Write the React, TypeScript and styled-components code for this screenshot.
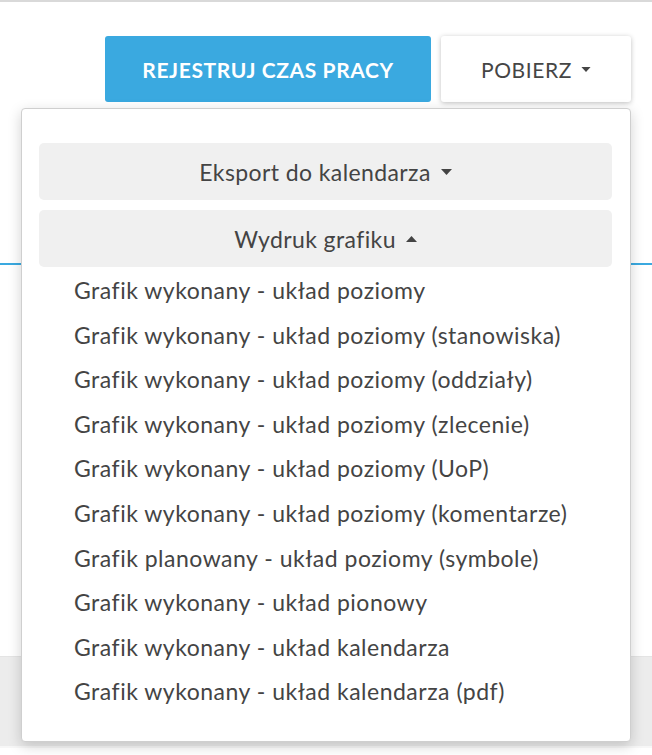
import React from 'react'
import styled, { createGlobalStyle } from 'styled-components'

const GlobalStyle = createGlobalStyle`
    body {
        margin: 0;
        background: #ffffff;
        font-family: Lato, "Open Sans", sans-serif;
        color: #444444;
    }
`

const Page = styled.div`
    position: relative;
    width: 652px;
    height: 755px;
    overflow: hidden;
    border-top: 2px solid #d9d9d9;
    box-sizing: border-box;
`

const Toolbar = styled.div`
    display: flex;
    justify-content: flex-end;
    gap: 10px;
    padding: 34px 21px 0 0;
`

const ActionButton = styled.button<{ $primary?: boolean }>`
    display: flex;
    align-items: center;
    justify-content: center;
    gap: 9px;
    height: 66px;
    border: none;
    border-radius: 3px;
    font-family: Lato, sans-serif;
    font-size: 21px;
    letter-spacing: 0.6px;
    font-weight: ${p => (p.$primary ? 700 : 400)};
    text-transform: uppercase;
    cursor: pointer;
    width: ${p => (p.$primary ? '326px' : '190px')};
    background: ${p => (p.$primary ? '#3aa9e0' : '#ffffff')};
    color: ${p => (p.$primary ? '#ffffff' : '#454545')};
    box-shadow: ${p => (p.$primary ? 'none' : '0 1px 5px rgba(0,0,0,0.25)')};
`

const Divider = styled.div`
    margin-top: 161px;
    height: 2px;
    background: #3aa9e0;
`

const Footer = styled.div`
    margin-top: 391px;
    height: 90px;
    background: #ececec;
    border-top: 1px solid #e4e4e4;
`

const FooterLine = styled.div`
    margin-top: 89px;
    height: 2px;
    background: #f7f7f7;
`

const Menu = styled.div`
    position: absolute;
    left: 21px;
    top: 106px;
    width: 610px;
    height: 634px;
    box-sizing: border-box;
    padding: 34px 18px 0 17px;
    background: #ffffff;
    border: 1px solid #cfcfcf;
    border-radius: 4px;
    box-shadow: 0 4px 14px rgba(0,0,0,0.18);
    display: flex;
    flex-direction: column;
    gap: 10px;
`

const SectionButton = styled.button`
    display: flex;
    align-items: center;
    justify-content: center;
    gap: 10px;
    height: 57px;
    border: none;
    border-radius: 5px;
    background: #f0f0f0;
    font-family: Lato, sans-serif;
    font-size: 23px;
    letter-spacing: 0.4px;
    color: #444444;
`

const List = styled.ul`
    list-style: none;
    margin: -9px 0 0;
    padding: 0 0 0 35px;
`

const Item = styled.li`
    height: 44.56px;
    display: flex;
    align-items: center;
    font-size: 23px;
    letter-spacing: 0.5px;
    color: #444444;
`

const Caret = ({ up, small }: { up?: boolean; small?: boolean }) => (
    <svg width={small ? 10 : 11} height={small ? 5 : 6} viewBox="0 0 11 6">
        <path d={up ? 'M0 6 L5.5 0 L11 6 Z' : 'M0 0 L5.5 6 L11 0 Z'} fill="currentColor" />
    </svg>
)

const items = [
    'Grafik wykonany - układ poziomy',
    'Grafik wykonany - układ poziomy (stanowiska)',
    'Grafik wykonany - układ poziomy (oddziały)',
    'Grafik wykonany - układ poziomy (zlecenie)',
    'Grafik wykonany - układ poziomy (UoP)',
    'Grafik wykonany - układ poziomy (komentarze)',
    'Grafik planowany - układ poziomy (symbole)',
    'Grafik wykonany - układ pionowy',
    'Grafik wykonany - układ kalendarza',
    'Grafik wykonany - układ kalendarza (pdf)',
]

const App = () => {
    return (
        <>
            <GlobalStyle />
            <Page>
                <Toolbar>
                    <ActionButton $primary>Rejestruj czas pracy</ActionButton>
                    <ActionButton>Pobierz <Caret small /></ActionButton>
                </Toolbar>
                <Divider />
                <Footer>
                    <FooterLine />
                </Footer>
                <Menu>
                    <SectionButton>Eksport do kalendarza <Caret /></SectionButton>
                    <SectionButton>Wydruk grafiku <Caret up /></SectionButton>
                    <List>
                        {items.map(i => <Item key={i}>{i}</Item>)}
                    </List>
                </Menu>
            </Page>
        </>
    )
}

export default App
